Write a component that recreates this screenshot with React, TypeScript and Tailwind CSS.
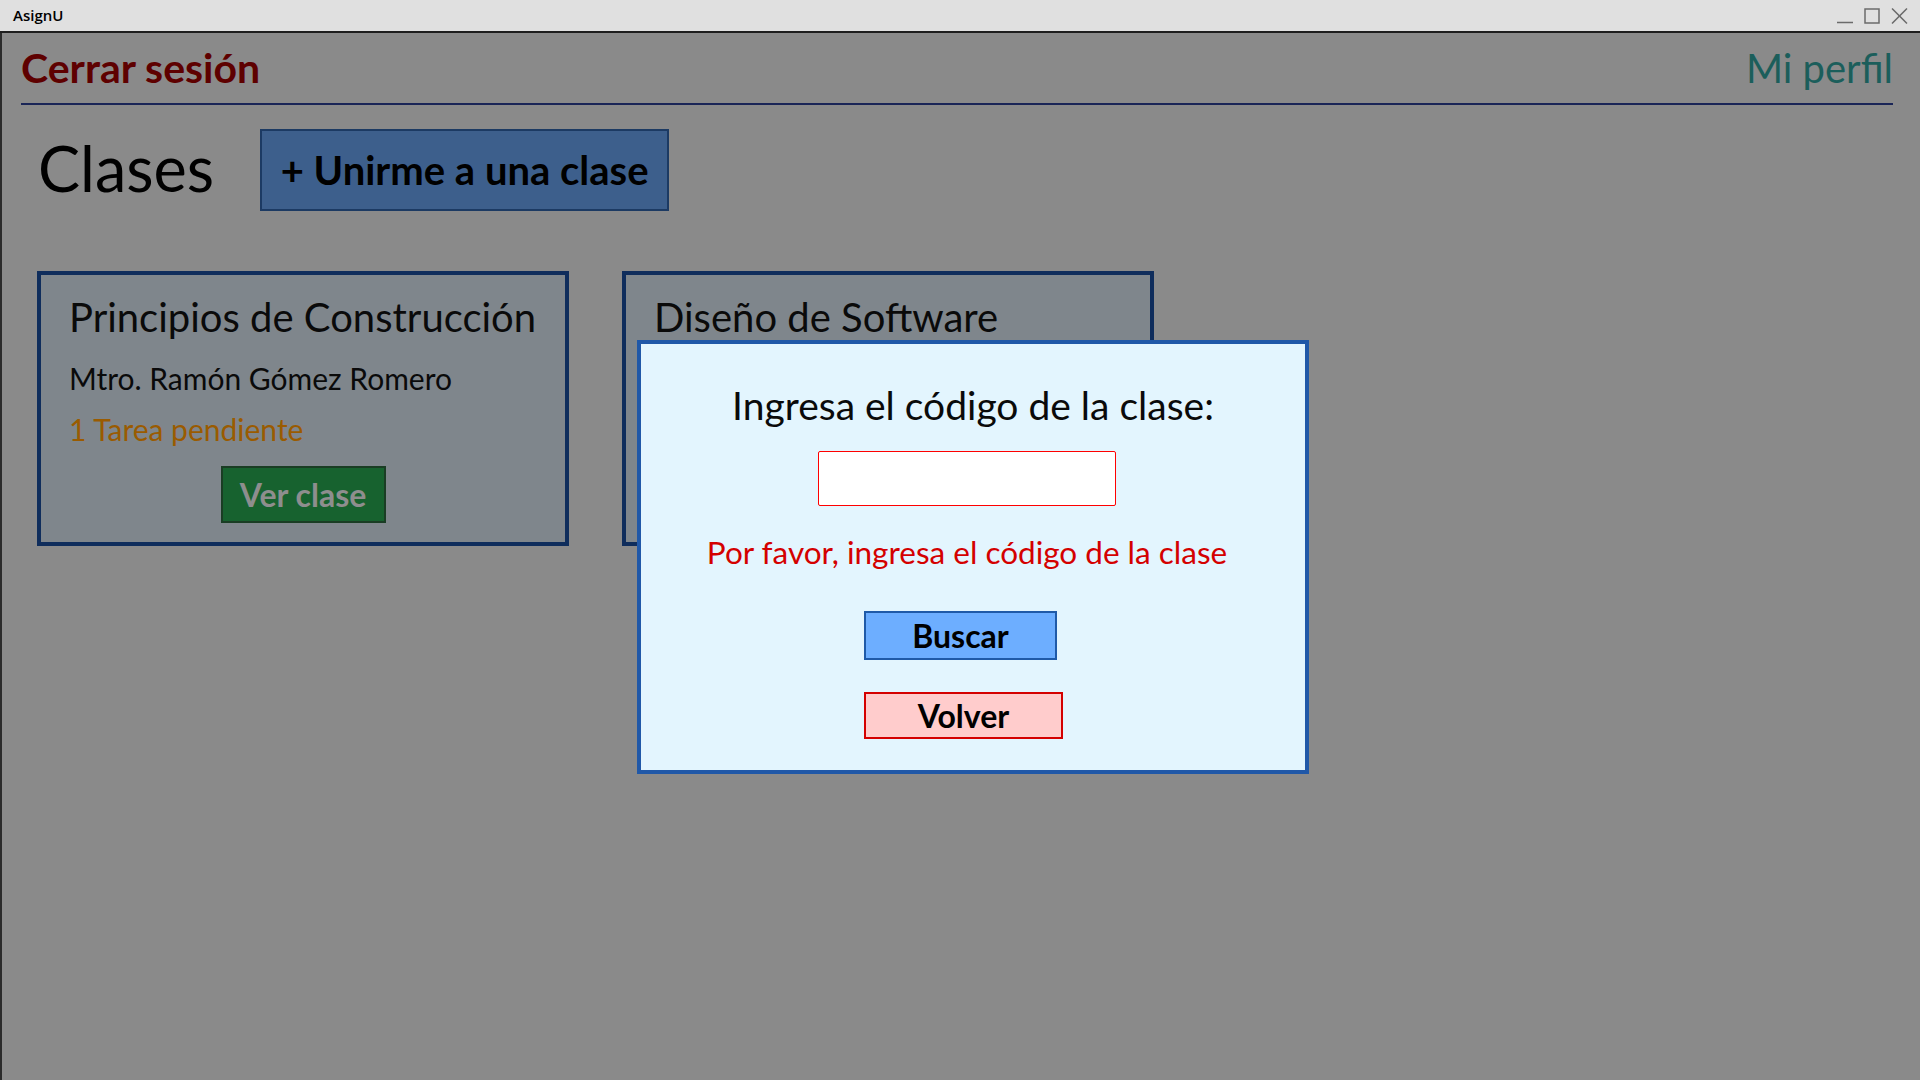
import React from "react";

const lato = { fontFamily: '"Lato", "Noto Sans", sans-serif' } as const;

function Card({
  title,
  teacher,
  pending,
}: {
  title: string;
  teacher?: string;
  pending?: string;
}) {
  return (
    <div className="w-[532px] h-[275px] shrink-0 border-4 border-[#0f2d5c] bg-[#7f868c] pl-[28px] pr-4 pt-[18px] flex flex-col">
      <div className="text-[40px] leading-[48px] text-[#0a0a0a] whitespace-nowrap">{title}</div>
      <div className="mt-[19px] h-[36px] text-[30px] leading-[36px] text-[#0a0a0a] whitespace-nowrap">
        {teacher}
      </div>
      <div className="mt-[15px] h-[36px] text-[30px] leading-[36px] text-[#9a5b00] whitespace-nowrap">
        {pending}
      </div>
      <div className="mt-[19px] flex justify-center pr-[12px]">
        <button className="w-[165px] h-[57px] border-2 border-[#1a3d24] bg-[#17622f] text-[32px] font-bold leading-none text-[#8e8e8e]">
          Ver clase
        </button>
      </div>
    </div>
  );
}

export default function App() {
  return (
    <div className="w-[1920px] h-[1080px] flex flex-col overflow-hidden" style={lato}>
      {/* Window title bar */}
      <div className="h-[33px] shrink-0 bg-[#e0e0e0] border-b-2 border-[#1e1e1e] flex items-center justify-between pl-[13px] pr-[12px]">
        <span
          className="text-[15px] font-semibold text-black"
          style={{ fontFamily: '"Open Sans", "Noto Sans", sans-serif' }}
        >
          AsignU
        </span>
        <div className="flex items-center gap-[11px] text-[#6b6b6b]">
          <svg width="16" height="16" viewBox="0 0 16 16">
            <line x1="0" y1="14.5" x2="16" y2="14.5" stroke="currentColor" strokeWidth="1.5" />
          </svg>
          <svg width="16" height="16" viewBox="0 0 16 16">
            <rect x="1" y="1" width="14" height="14" fill="none" stroke="currentColor" strokeWidth="1.5" />
          </svg>
          <svg width="17" height="16" viewBox="0 0 17 16">
            <line x1="1" y1="0.5" x2="16" y2="15.5" stroke="currentColor" strokeWidth="1.5" />
            <line x1="16" y1="0.5" x2="1" y2="15.5" stroke="currentColor" strokeWidth="1.5" />
          </svg>
        </div>
      </div>

      {/* App content */}
      <div className="relative flex-1 bg-[#8a8a8a] border-l-2 border-[#2b2b2b]">
        {/* Header */}
        <div className="ml-[19px] mr-[27px] pt-[11px] pb-[11px] flex items-end justify-between border-b-2 border-[#1a2557]">
          <button className="text-[41px] leading-[48px] font-bold text-[#5e0000]">Cerrar sesión</button>
          <button className="text-[40px] leading-[48px] text-[#1b5e5b]">Mi perfil</button>
        </div>

        {/* Clases row */}
        <div className="mt-[24px] pl-[36px] flex items-center">
          <h1 className="text-[63px] leading-[76px] text-black -mt-[5px]">Clases</h1>
          <button className="ml-[46px] w-[409px] h-[82px] border-2 border-[#1c3a63] bg-[#3d5f8c] text-[40px] font-bold text-black leading-none">
            + Unirme a una clase
          </button>
        </div>

        {/* Cards */}
        <div className="mt-[60px] pl-[35px] flex gap-[53px]">
          <Card
            title="Principios de Construcción"
            teacher="Mtro. Ramón Gómez Romero"
            pending="1 Tarea pendiente"
          />
          <Card title="Diseño de Software" />
        </div>

        {/* Modal */}
        <div className="absolute left-[635px] top-[307px] w-[672px] h-[434px] border-4 border-[#2058a8] bg-[#e3f5fe] flex flex-col items-center pt-[38px]">
          <div className="text-[39px] leading-[47px] text-[#0a0a0a] whitespace-nowrap">
            Ingresa el código de la clase:
          </div>
          <input
            className="mt-[22px] mr-[12px] w-[298px] h-[55px] bg-white border border-[#ff0000] rounded-[2px] outline-none"
            type="text"
          />
          <div className="mt-[27px] mr-[12px] text-[31.5px] leading-[38px] text-[#d40000] whitespace-nowrap">
            Por favor, ingresa el código de la clase
          </div>
          <button className="mt-[40px] mr-[25px] w-[193px] h-[49px] border-2 border-[#1f5aa8] bg-[#6daeff] text-[32px] font-bold leading-none text-black">
            Buscar
          </button>
          <button className="mt-[32px] mr-[19px] w-[199px] h-[47px] border-2 border-[#d40000] bg-[#ffcccc] text-[32px] font-bold leading-none text-black">
            Volver
          </button>
        </div>
      </div>
    </div>
  );
}
